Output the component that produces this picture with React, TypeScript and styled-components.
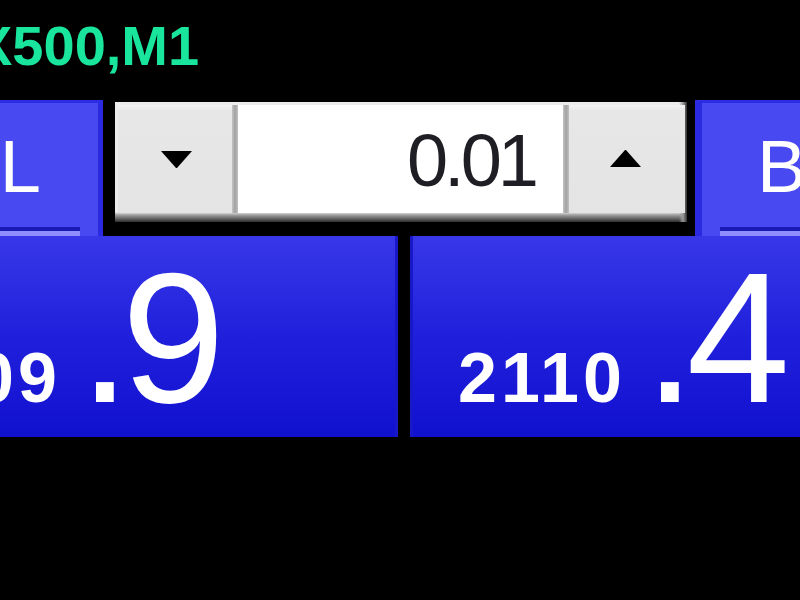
import React from "react";
import styled, { createGlobalStyle } from "styled-components";

const Global = createGlobalStyle`
  html, body { margin: 0; padding: 0; background: #000; }
  body { font-family: "Liberation Sans", Arial, sans-serif; }
`;

const Page = styled.div`
  width: 800px;
  height: 600px;
  overflow: hidden;
  background: #000;
  display: flex;
  flex-direction: column;
`;

const Caption = styled.div`
  margin: 18px 0 0 -25px;
  height: 56px;
  font-size: 56px;
  line-height: 1;
  font-weight: 700;
  color: #19e69c;
  white-space: nowrap;
`;

const Panel = styled.div`
  margin-top: 26px;
  display: flex;
  flex-direction: column;
`;

const TopRow = styled.div`
  display: flex;
  align-items: flex-start;
  height: 136px;
`;

const Tab = styled.div<{ $side: "sell" | "buy" }>`
  box-sizing: border-box;
  height: 136px;
  position: relative;
  background: #4949f1;
  border-top: 3px solid #2c2ce2;
  ${(p) =>
    p.$side === "sell"
      ? `width: 103px; border-right: 5px solid #2a2ae0; padding: 27px 57px 0 0; justify-content: flex-end;`
      : `flex: 1; margin-left: 8px; border-left: 7px solid #2a2ae0; padding: 27px 0 0 55px; justify-content: flex-start;`}
  display: flex;
  overflow: hidden;
`;

const TabLabel = styled.span`
  font-size: 74px;
  line-height: 1;
  color: #fff;
  white-space: nowrap;
`;

const Rule = styled.div<{ $side: "sell" | "buy" }>`
  position: absolute;
  bottom: 0;
  height: 9px;
  ${(p) => (p.$side === "sell" ? "left: 0; width: 80px;" : "left: 18px; right: 0;")}
  border-top: 4px solid #1a1ab4;
  background: #8e8eff;
  box-sizing: border-box;
`;

const Spin = styled.div`
  box-sizing: border-box;
  margin: 2px 0 0 12px;
  width: 572px;
  height: 120px;
  display: flex;
  padding: 3px 2px 9px 3px;
  background:
    linear-gradient(to right, transparent 564px, #9a9a9a 568px, #303030 572px),
    linear-gradient(to bottom, transparent 110px, #a0a0a0 113px, #2e2e2e 120px),
    #ececec;
`;

const SpinButton = styled.div<{ $side: "left" | "right" }>`
  width: 112px;
  flex: none;
  background: linear-gradient(#f3f3f3 0, #e7e7e7 6px, #e4e4e4 100%);
  display: flex;
  align-items: center;
  justify-content: center;
  ${(p) => (p.$side === "left" ? "padding-left: 2px;" : "padding-right: 4px;")}
`;

const Divider = styled.div`
  width: 6px;
  flex: none;
  background: linear-gradient(to right, #c4c4c4, #a2a2a2, #c0c0c0);
`;

const LotField = styled.div`
  flex: 1;
  background: #fff;
  display: flex;
  align-items: center;
  justify-content: flex-end;
  padding: 4px 28px 0 0;
  font-size: 74px;
  line-height: 1;
  letter-spacing: -4px;
  color: #1e1e24;
`;

const PriceRow = styled.div`
  display: flex;
  gap: 12px;
`;

const PriceBox = styled.div<{ $side: "sell" | "buy" }>`
  box-sizing: border-box;
  height: 201px;
  overflow: hidden;
  display: flex;
  align-items: baseline;
  padding-top: 9px;
  background: linear-gradient(#3838e8, #2020dc 50%, #1010cf);
  ${(p) =>
    p.$side === "sell"
      ? "width: 398px; justify-content: flex-end; padding-right: 179px; border-right: 3px solid #1818c8;"
      : "flex: 1; justify-content: flex-start; padding-left: 45px; border-left: 3px solid #1818c8;"}
`;

const SmallDigits = styled.span`
  font-size: 70px;
  line-height: 1;
  font-weight: 700;
  letter-spacing: 4px;
  color: #fff;
  margin-right: 18px;
  white-space: nowrap;
`;

const BigDigits = styled.span`
  font-size: 186px;
  line-height: 1;
  letter-spacing: -9px;
  color: #fff;
  white-space: nowrap;
`;

const Arrow = ({ dir }: { dir: "up" | "down" }) => (
  <svg width="33" height="20" viewBox="0 0 33 20">
    {dir === "down" ? (
      <polygon points="1,2 32,2 17,19 16,19" fill="#000" />
    ) : (
      <polygon points="16,1 17,1 32,18 1,18" fill="#000" />
    )}
  </svg>
);

export default function App() {
  return (
    <>
      <Global />
      <Page>
        <Caption>X500,M1</Caption>
        <Panel>
          <TopRow>
            <Tab $side="sell">
              <TabLabel>SELL</TabLabel>
              <Rule $side="sell" />
            </Tab>
            <Spin>
              <SpinButton $side="left">
                <Arrow dir="down" />
              </SpinButton>
              <Divider />
              <LotField>0.01</LotField>
              <Divider />
              <SpinButton $side="right">
                <Arrow dir="up" />
              </SpinButton>
            </Spin>
            <Tab $side="buy">
              <TabLabel>BUY</TabLabel>
              <Rule $side="buy" />
            </Tab>
          </TopRow>
          <PriceRow>
            <PriceBox $side="sell">
              <SmallDigits>2109</SmallDigits>
              <BigDigits>.9</BigDigits>
            </PriceBox>
            <PriceBox $side="buy">
              <SmallDigits>2110</SmallDigits>
              <BigDigits>.4</BigDigits>
            </PriceBox>
          </PriceRow>
        </Panel>
      </Page>
    </>
  );
}
